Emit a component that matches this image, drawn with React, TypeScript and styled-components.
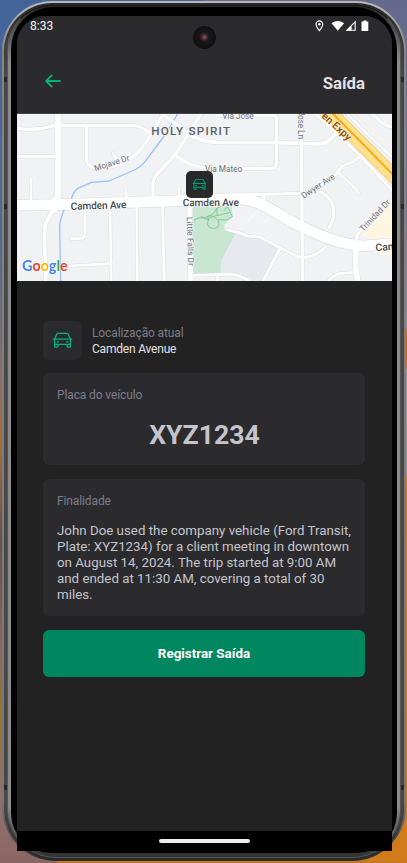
import React from "react";
import styled, { createGlobalStyle } from "styled-components";
import { PiCar, PiArrowLeftBold } from "react-icons/pi";

const GlobalStyle = createGlobalStyle`
  * { box-sizing: border-box; }
  body { margin: 0; background: #8c6a5c; font-family: Roboto, sans-serif; }
`;

const Desktop = styled.main`
  width: 407px;
  height: 863px;
  overflow: hidden;
  padding: 1px 1px 1px 2px;
  background:
    linear-gradient(90deg, transparent 55px, #c87820 60px) 0 861px / 100% 2px no-repeat,
    linear-gradient(180deg, #64698c 0, #7c7690 230px, #928d98 327px, #c7650d 332px, #c7650d 365px, #99979a 370px, #96979b 472px, #d67a12 480px, #d07b1c 863px) 203px 0 / 204px 100% no-repeat,
    linear-gradient(180deg, #42649a 0, #53698d 250px, #876d68 370px, #a66d3b 440px, #66514c 540px, #8b665a 650px, #9b742b 710px, #93706c 800px, #8a6764 863px);
`;

const Phone = styled.div`
  position: relative;
  height: 860px;
  padding: 2px 2px 1px;
  border-radius: 50px 50px 54px 54px;
  background: linear-gradient(180deg, #b9b9b9 0, #858585 50px, #777 800px, #303030 860px);
`;

const DarkRail = styled.div`
  height: 100%;
  padding: 2px 3px 2px 3px;
  border-radius: 48px 48px 52px 52px;
  background: linear-gradient(180deg, #292929 0, #484848 70px, #484848 800px, #282828 100%);
`;

const LightRail = styled.div`
  height: 100%;
  padding: 1px 3px 4px 3px;
  border-radius: 45px 45px 49px 49px;
  border: 1px solid #555;
  border-top-color: #191919;
  background: linear-gradient(180deg, #252525 0, #8b8b8b 55px, #8b8b8b 800px, #303030 100%);
`;

const Bezel = styled.div`
  height: 100%;
  padding: 9px 4px 0 6px;
  border-radius: 42px 42px 40px 40px;
  background: #000;
`;

const Screen = styled.div`
  display: flex;
  flex-direction: column;
  width: 375px;
  height: 835px;
  border-radius: 28px 28px 0 0;
  overflow: hidden;
  background: #222222;
`;

const Camera = styled.div`
  position: absolute;
  left: 191px;
  top: 25px;
  width: 23px;
  height: 23px;
  border-radius: 50%;
  background: radial-gradient(circle at 50% 48%, #9c5a82 0, #58323f 2px, #241c1f 4px, #171717 5px, #101011 11px);
`;

const SideMark = styled.i<{ $x: number; $y: number }>`
  position: absolute;
  left: ${(p) => p.$x}px;
  top: ${(p) => p.$y}px;
  width: 3px;
  height: 5px;
  background: #292929;
`;

const TopArea = styled.header`
  display: flex;
  flex-direction: column;
  flex: none;
  height: 98px;
  background: #2b2b2d;
  border-bottom: 1px solid #454547;
`;

const StatusBar = styled.div`
  display: flex;
  justify-content: space-between;
  align-items: center;
  height: 20px;
  padding: 0 22px 0 13px;
  color: #f4f4f4;
  font-size: 12px;
`;

const StatusIcons = styled.svg`
  width: 56px;
  height: 12px;
  display: block;
`;

const TitleBar = styled.div`
  display: flex;
  justify-content: space-between;
  align-items: center;
  height: 50px;
  margin-top: 24px;
  padding: 0 27px 4px 26px;
`;

const BackButton = styled.button`
  display: flex;
  padding: 0;
  margin-top: -4px;
  border: 0;
  background: none;
  color: #00b37e;
`;

const Title = styled.h1`
  margin: -1px 0 0;
  font-size: 16.8px;
  font-weight: 700;
  color: #e1e1e6;
`;

const MapArea = styled.div`
  position: relative;
  flex: none;
  height: 167px;
  svg { display: block; }
`;

const MapMarker = styled.div`
  position: absolute;
  left: 169px;
  top: 57px;
  display: flex;
  align-items: center;
  justify-content: center;
  width: 27px;
  height: 27px;
  border-radius: 5px;
  background: #29292b;
  color: #00a574;
`;

const Content = styled.div`
  display: flex;
  flex-direction: column;
  flex: 1;
  padding: 40px 27px 0 26px;
`;

const LocationRow = styled.div`
  display: flex;
  align-items: center;
  gap: 10px;
  height: 39px;
  margin-bottom: 13px;
`;

const IconBox = styled.div`
  display: flex;
  align-items: center;
  justify-content: center;
  width: 39px;
  height: 39px;
  border-radius: 6px;
  background: #2b2b2e;
  color: #00b37e;
`;

const LocationText = styled.div`
  display: flex;
  flex-direction: column;
  font-size: 12px;
  letter-spacing: -0.2px;
  line-height: 16px;
  color: #e1e1e6;
`;

const Label = styled.span`
  font-size: 12px;
  letter-spacing: -0.12px;
  line-height: 16px;
  color: #7c7c8a;
`;

const Card = styled.section<{ $h: number }>`
  display: flex;
  flex-direction: column;
  height: ${(p) => p.$h}px;
  margin-bottom: 14px;
  padding: 14px 13px 0 14px;
  border-radius: 6px;
  background: #2b2b2e;
`;

const Plate = styled.strong`
  margin-top: 16px;
  text-align: center;
  font-size: 26.6px;
  line-height: 32px;
  color: #c4c4cc;
`;

const Purpose = styled.p`
  margin: 14px -10px 0 0;
  font-size: 13.32px;
  line-height: 15.9px;
  color: #c4c4cc;
  white-space: pre-line;
`;

const SubmitButton = styled.button`
  height: 47px;
  padding: 0;
  border: 0;
  border-radius: 6px;
  background: #00875f;
  color: #fff;
  font: 700 13.4px Roboto, sans-serif;
`;

const SystemBar = styled.footer`
  display: flex;
  justify-content: center;
  flex: none;
  height: 20px;
  padding: 8px 0 0 0;
  background: #000;
`;

const HomeHandle = styled.div`
  width: 91px;
  height: 4px;
  border-radius: 2px;
  background: #ededed;
`;

const ROADS: { d: string; w: number }[] = [
  { d: "M144 0V280", w: 17 },
  { d: "M21 55C65 61 100 57 130 47H370C395 47 408 62 422 70", w: 10 },
  { d: "M230 47V145C230 170 245 176 275 175C330 168 370 145 395 115C416 89 427 60 460 15", w: 10 },
  { d: "M309 130L321 151", w: 8 },
  { d: "M21 139H144", w: 9 },
  { d: "M63 208V275", w: 8 },
  { d: "M580 0L535 72L495 135L440 194Q428 207 429 225V270", w: 10 },
  { d: "M448 5L500 44L550 80Q575 94 620 97L795 98L925 102C955 101 965 80 985 66", w: 11 },
  { d: "M495 135C520 157 555 169 590 176", w: 9 },
  { d: "M600 178L788 175Q799 173 799 160V22Q799 16 785 16H620", w: 9 },
  { d: "M874 0L876 330L878 525", w: 10 },
  { d: "M655 256L874 250M762 255V275", w: 9 },
  { d: "M875 254L930 227L975 194L1000 166L1030 155L1052 138", w: 9 },
  { d: "M982 185L1018 218L1048 250", w: 8 },
  { d: "M932 246C969 268 974 288 970 325L958 352", w: 9 },
  { d: "M905 0L1052 138L1160 255", w: 9 },
  { d: "M1000 0L1060 60L1160 155", w: 7 },
  { d: "M1080 5L1118 40Q1134 51 1150 52", w: 9 },
  { d: "M1150 268L1050 363Q1038 375 1037 405", w: 9 },
  { d: "M1037 400V460Q1036 485 1045 520", w: 17 },
  { d: "M1037 487L990 490Q970 495 955 513", w: 8 },
  { d: "M655 360L692 369L710 378L750 381L808 412L862 440C898 448 925 433 948 409", w: 8 },
  { d: "M810 415L758 516", w: 8 },
  { d: "M545 496L660 493Q690 492 730 523M622 494V515", w: 8 },
  { d: "M538 280L542 525", w: 14 },
  { d: "M300 285L304 525M380 285L382 525M457 280L463 525", w: 8 },
  { d: "M348 238L351 275M507 233V270", w: 7 },
  { d: "M225 295V370Q225 386 210 386H185", w: 8 },
  { d: "M304 461L165 468", w: 8 },
  { d: "M132 295L112 330Q104 342 104 362V400C104 460 113 475 105 525", w: 11 },
];

const CAMDEN = "M10 286L140 284L520 272L690 266C750 270 790 305 850 337C930 380 1000 404 1060 408L1160 400";

function StreetMap() {
  return (
    <svg width="375" height="167" viewBox="21 12 1125 501" fontFamily="Roboto, sans-serif" fill="none" strokeLinejoin="round" strokeLinecap="round">
      <rect x="21" y="12" width="1125" height="501" fill="#f0f2f4" />
      <path d="M548 288H665L668 320L642 345L645 362L678 370L635 450L632 492H548Z" fill="#c8e6d2" />
      <path d="M678 370L750 383L808 414L756 513H730Q690 487 632 487L635 450Z" fill="#e7e9ee" />
      <path d="M1055 375L1146 272V385L1085 390ZM1110 430L1146 424V432L1112 437Z" fill="#fff6e1" />
      <g stroke="#dcdfe4">
        {ROADS.map((r) => <path key={r.d} d={r.d} strokeWidth={r.w + 3} />)}
        <path d={CAMDEN} strokeWidth="36" />
      </g>
      <path d="M507 5L465 75L405 155Q390 173 373 180L297 213L245 217L203 235Q190 244 183 270L163 296Q150 330 149 350L152 520" stroke="#9cc2f9" strokeWidth="4" />
      <g stroke="#fff">
        {ROADS.map((r) => <path key={r.d} d={r.d} strokeWidth={r.w} />)}
        <path d={CAMDEN} strokeWidth="32" />
        <path d="M140 252L166 284L130 310L116 284Z" fill="#fff" />
        <path d="M710 340L724 320L738 310L750 296M752 345L778 325" stroke="#f8f9fa" strokeWidth="3" />
      </g>
      <path d="M938 -15L1165 212" stroke="#f5cb68" strokeWidth="42" />
      <path d="M938 -15L1165 212" stroke="#ffe08c" strokeWidth="37" />
      <path d="M965 7L1165 210" stroke="#f5aa19" strokeWidth="6" />
      <g stroke="#71c58c" strokeWidth="2.5">
        <path d="M553 330Q570 318 590 328L620 316M595 330C585 350 605 360 620 353S625 325 608 319S590 319 595 330ZM573 321Q602 330 620 296L630 291M620 296L622 317L660 307L667 320L650 330L625 329M642 302L652 291L660 303" />
      </g>
      <g fill="#70757a" stroke="#f0f2f4" strokeWidth="5" paintOrder="stroke" fontSize="25">
        <text transform="translate(256 184) rotate(-18)" textLength="109">Mojave Dr</text>
        <text x="637" y="26" textLength="94">Via Jose</text>
        <text x="585" y="186" textLength="112">Via Mateo</text>
        <text transform="translate(530 321) rotate(88)" textLength="147">Little Falls Dr</text>
        <text transform="translate(864 2) rotate(90)" textLength="85">Jose Ln</text>
        <text transform="translate(881 266) rotate(-33)" textLength="114">Dwyer Ave</text>
        <text transform="translate(1060 366) rotate(-47)" textLength="120">Trinidad Dr</text>
      </g>
      <text transform="translate(933 21) rotate(42)" fill="#82450f" stroke="#fff2d0" strokeWidth="4" paintOrder="stroke" fontSize="31" fontWeight="500" textLength="108">en Expy</text>
      <g fill="#45494e" stroke="#fff" strokeWidth="5" paintOrder="stroke" fontSize="31" fontWeight="500">
        <text transform="translate(182 300) rotate(-2)" textLength="168">Camden Ave</text>
        <text x="518" y="289" textLength="169" transform="rotate(-.5 518 289)">Camden Ave</text>
        <text transform="translate(1097 424) rotate(-5)">Camden Ave</text>
      </g>
      <text x="424" y="76" fill="#5c6166" stroke="#f0f2f4" strokeWidth="5" paintOrder="stroke" fontSize="35" fontWeight="500" textLength="236">HOLY SPIRIT</text>
      <text x="36" y="484" fontFamily="Lato, sans-serif" fontSize="44" fontWeight="700" textLength="137" lengthAdjust="spacingAndGlyphs" stroke="#fff" strokeWidth="4" paintOrder="stroke">
        <tspan fill="#4285f4">G</tspan><tspan fill="#ea4335">o</tspan><tspan fill="#fbbc05">o</tspan><tspan fill="#4285f4">g</tspan><tspan fill="#34a853">l</tspan><tspan fill="#ea4335">e</tspan>
      </text>
    </svg>
  );
}

export default function App() {
  return (
    <>
      <GlobalStyle />
      <Desktop>
        <Phone>
          <DarkRail>
            <LightRail>
              <Bezel>
                <Screen>
                  <TopArea>
                    <StatusBar>
                      <span>8:33</span>
                      <StatusIcons viewBox="0 0 56 12" fill="#fff">
                        <path d="M5.4.9a3.3 3.3 0 0 0-3.3 3.3C2.1 6.7 5.4 10.6 5.4 10.6s3.3-3.9 3.3-6.4A3.3 3.3 0 0 0 5.4.9Z" fill="none" stroke="#fff" strokeWidth="1.2" />
                        <circle cx="5.4" cy="4.2" r="1.2" />
                        <path d="M17.5 3.2Q23.8-1.4 30.1 3.2L23.8 10.7Z" />
                        <path d="M41.2 1.8V10.2H32.8Z" fill="none" stroke="#fff" strokeWidth="1.1" />
                        <path d="M37.6 5.4V10.5H32.5Z" />
                        <path d="M49.5 .4h3v1H54.3v9.6h-6.8V1.4h2Z" />
                      </StatusIcons>
                    </StatusBar>
                    <TitleBar>
                      <BackButton aria-label="Voltar"><PiArrowLeftBold size={20} /></BackButton>
                      <Title>Saída</Title>
                    </TitleBar>
                  </TopArea>
                  <MapArea>
                    <StreetMap />
                    <MapMarker><PiCar size={15} /></MapMarker>
                  </MapArea>
                  <Content>
                    <LocationRow>
                      <IconBox><PiCar size={21} /></IconBox>
                      <LocationText>
                        <Label>Localização atual</Label>
                        <span>Camden Avenue</span>
                      </LocationText>
                    </LocationRow>
                    <Card $h={92}>
                      <Label>Placa do veículo</Label>
                      <Plate>XYZ1234</Plate>
                    </Card>
                    <Card $h={137}>
                      <Label>Finalidade</Label>
                      <Purpose>{"John Doe used the company vehicle (Ford Transit,\nPlate: XYZ1234) for a client meeting in downtown\non August 14, 2024. The trip started at 9:00 AM\nand ended at 11:30 AM, covering a total of 30\nmiles."}</Purpose>
                    </Card>
                    <SubmitButton>Registrar Saída</SubmitButton>
                  </Content>
                  <SystemBar><HomeHandle /></SystemBar>
                </Screen>
              </Bezel>
            </LightRail>
          </DarkRail>
          <Camera />
          {[76, 203, 784].map((y) => <SideMark key={y} $x={2} $y={y} />)}
          {[76, 203, 784].map((y) => <SideMark key={`r${y}`} $x={399} $y={y} />)}
        </Phone>
      </Desktop>
    </>
  );
}
